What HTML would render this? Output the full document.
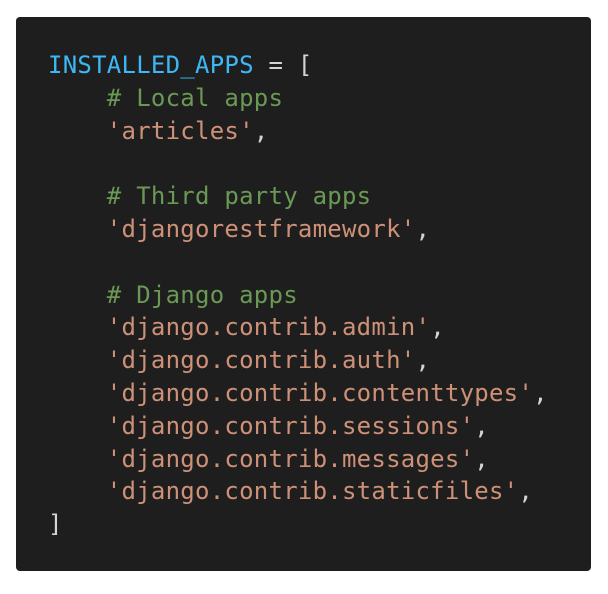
<!DOCTYPE html>
<html><head><meta charset="utf-8"><style>
html,body{margin:0;padding:0;background:#fff;width:608px;height:594px;overflow:hidden}
.box{position:absolute;left:16px;top:17px;width:575px;height:554px;background:#1e1e1e;border-radius:4px}
pre{position:absolute;left:32px;top:32px;margin:0;font-family:"DejaVu Sans Mono","Liberation Mono",monospace;font-size:24px;letter-spacing:0.25px;line-height:32.8px;color:#d4d4d4}
.b{color:#3db8f5}.g{color:#6a9955}.s{color:#ce9178}
</style></head><body>
<div class="box"><pre><span class="b">INSTALLED_APPS</span> = [
    <span class="g"># Local apps</span>
    <span class="s">'articles'</span>,

    <span class="g"># Third party apps</span>
    <span class="s">'djangorestframework'</span>,

    <span class="g"># Django apps</span>
    <span class="s">'django.contrib.admin'</span>,
    <span class="s">'django.contrib.auth'</span>,
    <span class="s">'django.contrib.contenttypes'</span>,
    <span class="s">'django.contrib.sessions'</span>,
    <span class="s">'django.contrib.messages'</span>,
    <span class="s">'django.contrib.staticfiles'</span>,
]</pre></div>
</body></html>
